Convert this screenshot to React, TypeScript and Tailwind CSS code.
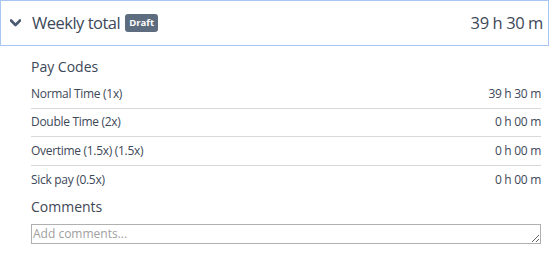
import React from "react";

const rows = [
  { label: "Normal Time (1x)", value: "39 h 30 m" },
  { label: "Double Time (2x)", value: "0 h 00 m" },
  { label: "Overtime (1.5x) (1.5x)", value: "0 h 00 m" },
  { label: "Sick pay (0.5x)", value: "0 h 00 m" },
];

export default function App() {
  return (
    <div
      className="w-[550px] h-[271px] bg-white text-[#3d4858]"
      style={{ fontFamily: '"Open Sans", sans-serif' }}
    >
      <div className="w-[549px] h-[46px] border border-[#a9c6f2] flex items-center pl-[9px] pr-[5px]">
        <svg width="11" height="8" viewBox="0 0 11 8" className="mr-[11px]">
          <path d="M1 1.5 L5.5 6 L10 1.5" stroke="#4a5a70" strokeWidth="2.6" fill="none" strokeLinecap="round" strokeLinejoin="round" />
        </svg>
        <span className="text-[16.5px] tracking-[-0.5px] leading-none">Weekly total</span>
        <span className="ml-[5px] bg-[#5d6c7e] text-white text-[9.5px] font-bold rounded-[3px] px-[4px] h-[18px] flex items-center">
          Draft
        </span>
        <span className="ml-auto text-[16.5px] tracking-[-0.4px] leading-none">39 h 30 m</span>
      </div>
      <div className="pl-[31px] pr-[9px] pt-[11px]">
        <div className="text-[14px] leading-[20px]">Pay Codes</div>
        <div className="mt-[3px]">
          {rows.map((r, i) => (
            <div
              key={r.label}
              className={
                "flex justify-between items-center h-[28.5px] text-[12px] tracking-[-0.3px] " +
                (i < rows.length - 1 ? "border-b border-[#d9d9d9]" : "")
              }
            >
              <span>{r.label}</span>
              <span>{r.value}</span>
            </div>
          ))}
        </div>
        <div className="text-[14px] leading-[20px] mt-[3px]">Comments</div>
        <textarea
          placeholder="Add comments..."
          className="mt-[7px] block w-full h-[20px] border border-[#b0b0b0] text-[12px] leading-[17px] px-[1px] py-0 placeholder:text-[#a0a0a0] outline-none"
          style={{ fontFamily: '"Open Sans", sans-serif' }}
        />
      </div>
    </div>
  );
}
